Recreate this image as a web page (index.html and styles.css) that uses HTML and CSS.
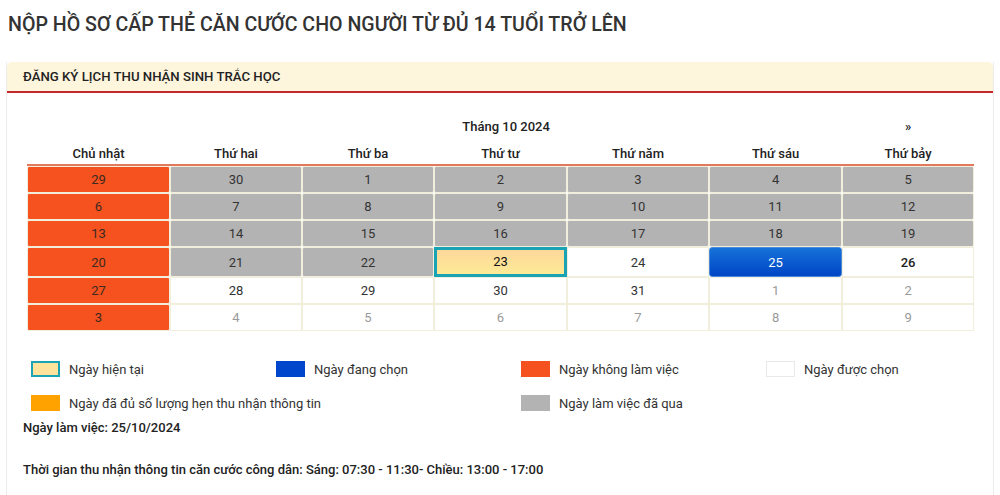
FILE: index.html
```html
<!DOCTYPE html>
<html lang="vi">
<head>
<meta charset="utf-8">
<title>Nộp hồ sơ cấp thẻ căn cước</title>
<link rel="stylesheet" href="styles.css">
</head>
<body>
<h1 class="page-title">NỘP HỒ SƠ CẤP THẺ CĂN CƯỚC CHO NGƯỜI TỪ ĐỦ 14 TUỔI TRỞ LÊN</h1>
<section class="panel">
  <div class="panel-head">ĐĂNG KÝ LỊCH THU NHẬN SINH TRẮC HỌC</div>
  <div class="panel-body">
    <table class="cal">
      <colgroup>
        <col class="col-143"><col class="col-132"><col class="col-132"><col class="col-133"><col class="col-142"><col class="col-133"><col class="col-132">
      </colgroup>
      <thead>
        <tr class="cal-nav"><th></th><th colspan="5">Tháng 10 2024</th><th>»</th></tr>
        <tr class="cal-days"><th>Chủ nhật</th><th>Thứ hai</th><th>Thứ ba</th><th>Thứ tư</th><th>Thứ năm</th><th>Thứ sáu</th><th>Thứ bảy</th></tr>
      </thead>
      <tbody>
        <tr><td class="off">29</td><td class="past">30</td><td class="past">1</td><td class="past">2</td><td class="past">3</td><td class="past">4</td><td class="past">5</td></tr>
        <tr><td class="off">6</td><td class="past">7</td><td class="past">8</td><td class="past">9</td><td class="past">10</td><td class="past">11</td><td class="past">12</td></tr>
        <tr><td class="off">13</td><td class="past">14</td><td class="past">15</td><td class="past">16</td><td class="past">17</td><td class="past">18</td><td class="past">19</td></tr>
        <tr class="row-today"><td class="off">20</td><td class="past">21</td><td class="past">22</td><td class="today">23</td><td>24</td><td class="selected">25</td><td class="strong">26</td></tr>
        <tr><td class="off">27</td><td>28</td><td>29</td><td>30</td><td>31</td><td class="other">1</td><td class="other">2</td></tr>
        <tr><td class="off">3</td><td class="other">4</td><td class="other">5</td><td class="other">6</td><td class="other">7</td><td class="other">8</td><td class="other">9</td></tr>
      </tbody>
    </table>

    <div class="legend">
      <div class="legend-item"><span class="sw sw-today"></span>Ngày hiện tại</div>
      <div class="legend-item"><span class="sw sw-selected"></span>Ngày đang chọn</div>
      <div class="legend-item"><span class="sw sw-off"></span>Ngày không làm việc</div>
      <div class="legend-item"><span class="sw sw-free"></span>Ngày được chọn</div>
      <div class="legend-item span-2"><span class="sw sw-full"></span>Ngày đã đủ số lượng hẹn thu nhận thông tin</div>
      <div class="legend-item"><span class="sw sw-past"></span>Ngày làm việc đã qua</div>
    </div>

    <p class="info">Ngày làm việc: 25/10/2024</p>
    <p class="info info-time">Thời gian thu nhận thông tin căn cước công dân: Sáng: 07:30 - 11:30- Chiều: 13:00 - 17:00</p>
  </div>
</section>
</body>
</html>
```

FILE: styles.css
```css
html, body {
  margin: 0;
  background: #fff;
}

body {
  padding: 0 6px;
  font-family: Roboto, "Noto Sans", Arial, sans-serif;
  color: #333;
  font-size: 13px;
}

.page-title {
  margin: 13px 0 0;
  padding-left: 2px;
  font-size: 19.6px;
  line-height: 24px;
  font-weight: 500;
  color: #333;
}

.panel {
  margin-top: 25px;
  border-left: 1px solid #ececec;
  border-right: 1px solid #ececec;
  min-height: 520px;
}

.panel-head {
  height: 29px;
  line-height: 29px;
  padding-left: 16px;
  background: #fdf5dc;
  border-bottom: 2px solid #c3282b;
  border-radius: 5px 5px 0 0;
  font-size: 13.2px;
  font-weight: 500;
  color: #222;
}

.panel-body {
  padding: 20px 19px 0 16px;
}

.cal {
  margin-left: 4px;
  table-layout: fixed;
  width: 947px;
  border-collapse: separate;
  border-spacing: 0;
}

.col-143 { width: 143px; }
.col-142 { width: 142px; }
.col-133 { width: 133px; }
.col-132 { width: 132px; }

.cal th {
  font-weight: 500;
  font-size: 13px;
  line-height: 20px;
  color: #222;
  text-align: center;
}

.cal-nav th {
  padding: 4px 0 4px;
}

.cal-days th {
  padding: 3px 0 0;
  border-bottom: 2px solid #e2785c;
}

.cal td {
  text-align: center;
  vertical-align: middle;
  line-height: 25px;
  padding: 0;
  border: 1px solid #f1efdc;
  color: #333;
  font-size: 13px;
}

.cal td.off {
  background: #f5521f;
  color: #3a2a20;
  border-radius: 2px;
}

.cal td.past {
  background: #b3b3b3;
  color: #333;
  border-radius: 2px;
}

.cal td.other {
  color: #9a9a9a;
}

.cal td.strong {
  font-weight: 500;
  color: #222;
}

.cal td.today {
  line-height: 24px;
  border: 3px solid #1aa3b5;
  background: linear-gradient(#fdd89b, #fdea95);
  color: #111;
}

.cal td.selected {
  background: linear-gradient(#1672d9, #0045c6);
  border-color: #4a8ad8;
  border-radius: 3px;
  color: #fff;
}

.legend {
  margin-top: 30px;
  padding-left: 8px;
  display: grid;
  grid-template-columns: repeat(4, 245px);
  row-gap: 18px;
}

.legend-item {
  display: flex;
  align-items: center;
  height: 16px;
  gap: 9px;
  font-size: 13px;
  color: #333;
}

.span-2 {
  grid-column: span 2;
}

.sw {
  box-sizing: border-box;
  width: 29px;
  height: 16px;
  flex: none;
}

.sw-today {
  border: 2px solid #1aa3b5;
  background: #fde39c;
}

.sw-selected { background: #0046cc; }
.sw-off { background: #f5521f; }
.sw-free { background: #fff; border: 1px solid #e8e8e8; }
.sw-full { background: #ffa200; }
.sw-past { background: #b3b3b3; }

.info {
  margin: 7px 0 0;
  line-height: 20px;
  font-size: 13px;
  font-weight: 500;
  color: #222;
}

.info-time {
  margin-top: 22px;
}
```
